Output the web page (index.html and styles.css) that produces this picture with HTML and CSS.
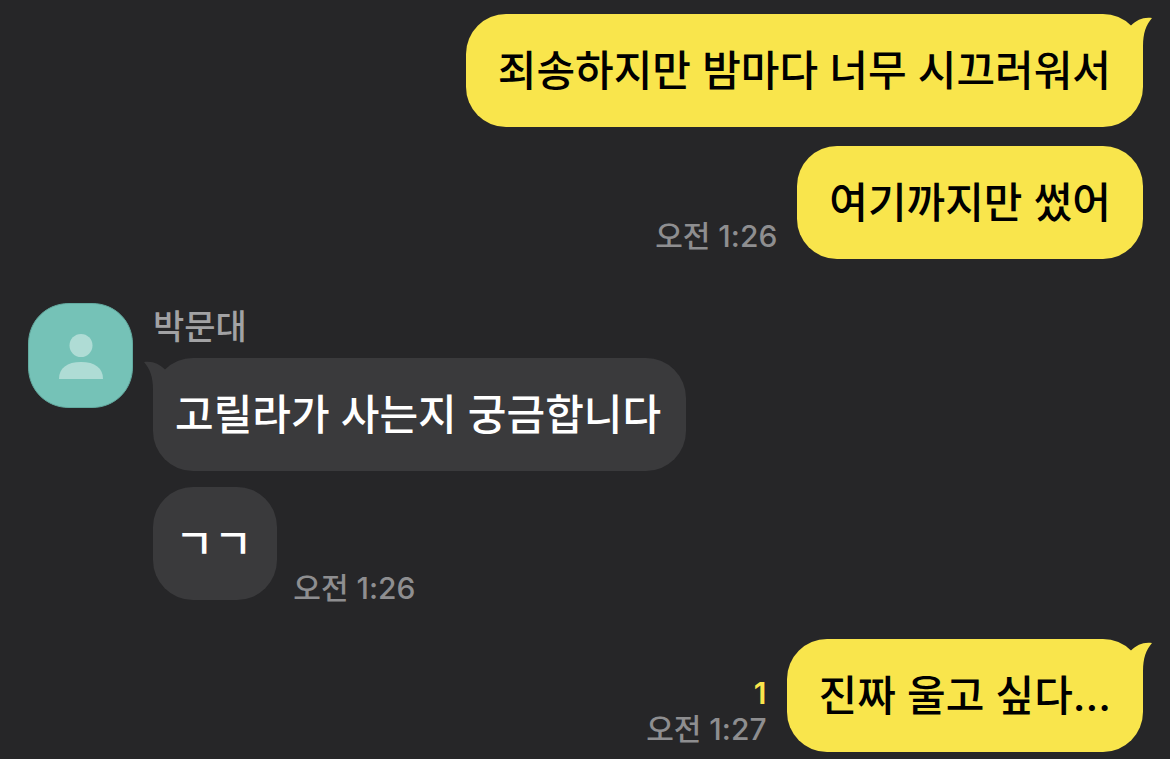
FILE: index.html
```html
<!DOCTYPE html>
<html lang="ko">
<head>
    <meta charset="UTF-8">
    <meta name="viewport" content="width=device-width, initial-scale=1.0">
    <title>박문대</title>
    <link rel="stylesheet" href="styles.css">
</head>
<body>
    <main class="chat">
        <section class="group mine">
            <div class="row">
                <p class="bubble">죄송하지만 밤마다 너무 시끄러워서
                    <svg class="tail" viewBox="0 0 24 44" aria-hidden="true"><path d="M2 9.500C8 4 14 .8 23 2C17 9 14 17 14 30V44H2Z"/></svg>
                </p>
            </div>
            <div class="row">
                <p class="bubble">여기까지만 썼어</p>
                <div class="meta"><time>오전 1:26</time></div>
            </div>
        </section>

        <section class="group theirs">
            <svg class="avatar" viewBox="0 0 105 105" role="img" aria-label="박문대">
                <path class="avatar-bg" d="M41 .5H64C87 .5 104.500 18 104.500 41V64C104.500 87 87 104.500 64 104.500H41C18 104.500 .5 87 .5 64V41C.5 18 18 .5 41 .5Z"/>
                <circle class="avatar-person" cx="53" cy="42.500" r="11.500"/>
                <path class="avatar-person" d="M31 76C31 65 39 59 53 59S75 65 75 76Z"/>
            </svg>
            <div class="messages">
                <h2 class="name">박문대</h2>
                <div class="row">
                    <p class="bubble">고릴라가 사는지 궁금합니다
                        <svg class="tail" viewBox="0 0 24 44" aria-hidden="true"><path d="M2 9.500C8 4 14 .8 23 2C17 9 14 17 14 30V44H2Z"/></svg>
                    </p>
                </div>
                <div class="row">
                    <p class="bubble">ㄱㄱ</p>
                    <div class="meta"><time>오전 1:26</time></div>
                </div>
            </div>
        </section>

        <section class="group mine">
            <div class="row">
                <p class="bubble">진짜 울고 싶다...
                    <svg class="tail" viewBox="0 0 24 44" aria-hidden="true"><path d="M2 9.500C8 4 14 .8 23 2C17 9 14 17 14 30V44H2Z"/></svg>
                </p>
                <div class="meta">
                    <span class="unread">1</span>
                    <time>오전 1:27</time>
                </div>
            </div>
        </section>
    </main>
</body>
</html>
```
FILE: styles.css
```css
* {
    box-sizing: border-box;
}
body {
    margin: 0;
    background-color: #262628;
    color: #fff;
    font-family: Inter, 'Noto Sans CJK KR', sans-serif;
}
h2, p {
    margin: 0;
}
.chat {
    display: flex;
    flex-direction: column;
    gap: 39px;
    padding: 14px 27px 6px 28px;
}
.group {
    display: flex;
}
.mine {
    flex-direction: column;
    gap: 19px;
}
.theirs {
    gap: 20px;
    align-items: flex-start;
    padding-top: 5px;
}
.messages {
    display: flex;
    flex-direction: column;
    gap: 16px;
}
.row {
    display: flex;
    align-items: flex-end;
    gap: 16px;
}
.mine .row {
    flex-direction: row-reverse;
    gap: 20px;
}

/* Bubbles */
.bubble {
    position: relative;
    padding: 28px 32px;
    border-radius: 40px;
    background-color: #f9e54c;
    color: #000;
    font-size: 42px;
    font-weight: 500;
    line-height: 57px;
}
.theirs .bubble {
    padding: 28px 25px 28px 22px;
    background-color: #3a3a3c;
    color: #fff;
}
.tail {
    position: absolute;
    top: 2px;
    right: -10px;
    width: 24px;
    height: 44px;
    fill: #f9e54c;
}
.theirs .tail {
    right: auto;
    left: -10px;
    transform: scaleX(-1);
    fill: #3a3a3c;
}

/* Time and unread count */
.meta {
    display: flex;
    flex-direction: column;
    align-items: flex-end;
    margin-bottom: 5px;
    color: #8e8e90;
    font-size: 30px;
    font-weight: 500;
    line-height: 36px;
}
.theirs .meta {
    margin-bottom: -6px;
}
.unread {
    color: #f9e54c;
    font-weight: 600;
}

.avatar {
    flex: none;
    width: 105px;
    height: 105px;
}
.avatar-bg {
    fill: #75c2b7;
    stroke: #63aaa0;
}
.avatar-person {
    fill: #afdcd5;
}
.name {
    margin-bottom: -8px;
    color: #a2a2a4;
    font-size: 34px;
    font-weight: 500;
    line-height: 47px;
}
```
